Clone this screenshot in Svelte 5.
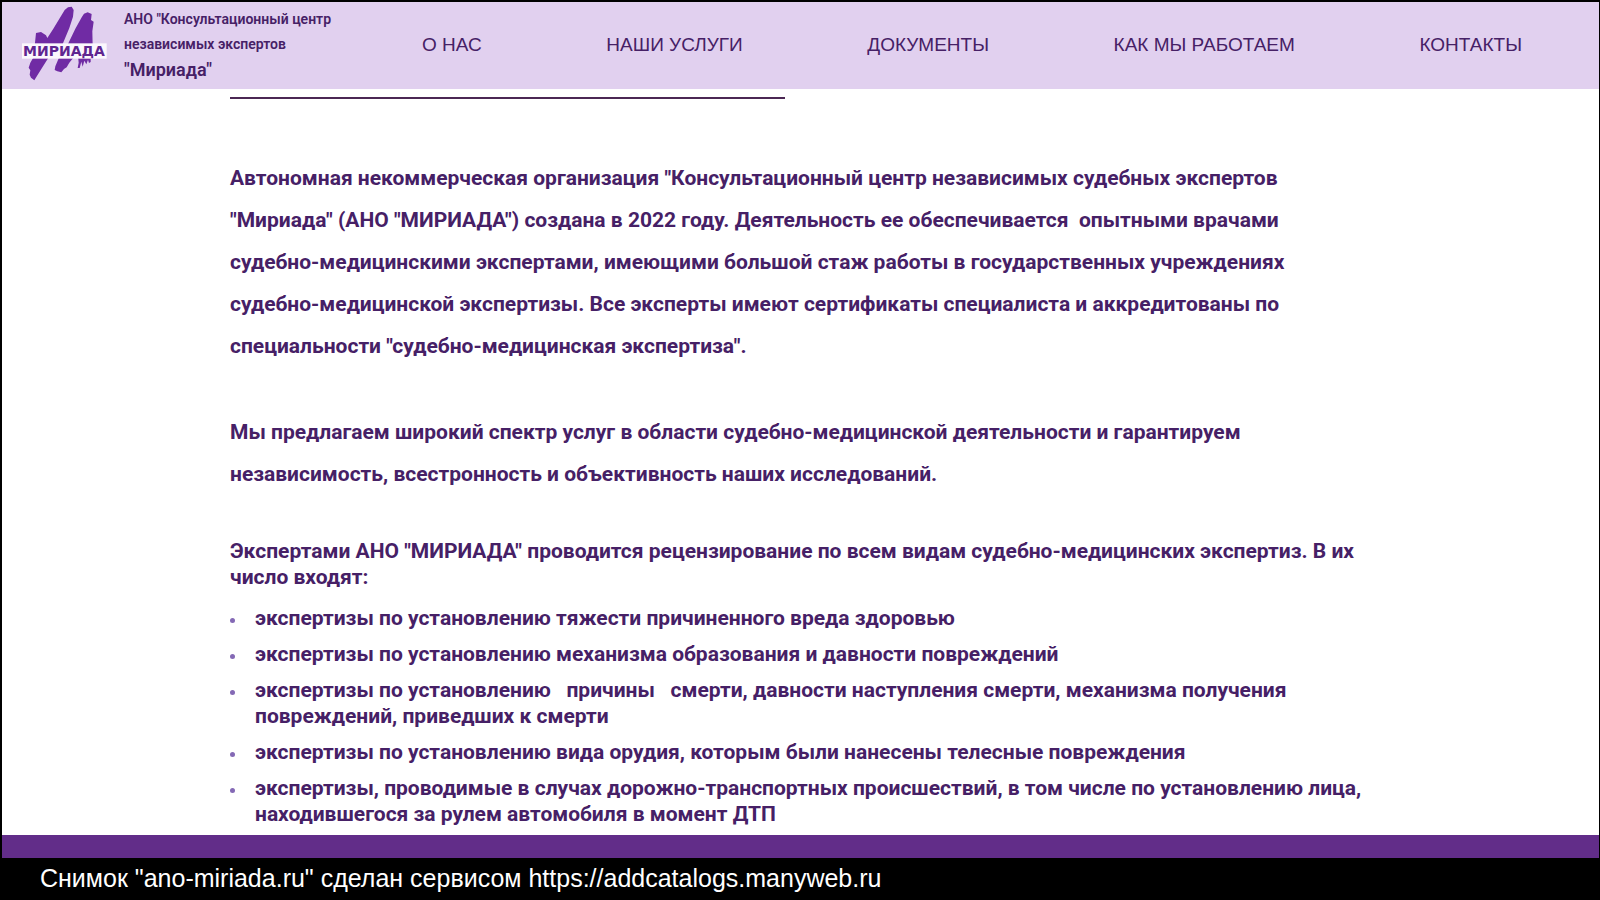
<script>
  const links = ['О НАС', 'НАШИ УСЛУГИ', 'ДОКУМЕНТЫ', 'КАК МЫ РАБОТАЕМ', 'КОНТАКТЫ'];
  const items = [
    'экспертизы по установлению тяжести причиненного вреда здоровью',
    'экспертизы по установлению механизма образования и давности повреждений',
    'экспертизы по установлению \u00a0 причины \u00a0 смерти, давности наступления смерти, механизма получения повреждений, приведших к смерти',
    'экспертизы по установлению вида орудия, которым были нанесены телесные повреждения',
    'экспертизы, проводимые в случах дорожно-транспортных происшествий, в том числе по установлению лица, находившегося за рулем автомобиля в момент ДТП'
  ];
</script>

<div class="page">
  <div class="site">
    <header>
      <a class="brand" href="#top">
        <svg class="logo" viewBox="66 20 258 234" aria-hidden="true">
          <g fill="#702ba4">
            <path d="M108 101 123 98 138 108 142 116 160 88 194 32 204 24 215 22 221 32 219 52 208 86 188 134 204 134 226 88 246 52 252 43 263 39 275 44 273 62 281 67 277 96 278 140 H104 Z" />
            <path d="M104 168 H150 L132 196 116 222 103 243 93 235 89 226 91 213 86 205 91 190Z" />
            <path d="M180 168 H226 L208 190 200 204 192 209 184 219 172 216 164 212 166 201Z" />
            <path d="M234 168 H272 V188 L267 191 264 181 259 195 253 184 248 202 244 187 239 206 233 206 236 190Z" />
          </g>
          <rect x="66" y="132" width="254" height="46" fill="#fbf7fd" />
          <text x="69" y="169">МИРИАДА</text>
        </svg>
        <span class="name">
          <span>АНО "Консультационный центр</span>
          <span>независимых экспертов</span>
          <span class="short">"Мириада"</span>
        </span>
      </a>
      <nav>
        {#each links as link}
          <a href="#top">{link}</a>
        {/each}
      </nav>
    </header>
    <main id="top">
      <hr />
      <p class="wide first">Автономная некоммерческая организация "Консультационный центр независимых судебных экспертов "Мириада" (АНО "МИРИАДА") создана в 2022 году. Деятельность ее обеспечивается&nbsp; опытными врачами судебно-медицинскими экспертами, имеющими большой стаж работы в государственных учреждениях судебно-медицинской экспертизы. Все эксперты имеют сертификаты специалиста и аккредитованы по специальности "судебно-медицинская экспертиза".</p>
      <p class="wide">Мы предлагаем широкий спектр услуг в области судебно-медицинской деятельности и гарантируем независимость, всестронность и объективность наших исследований.</p>
      <p>Экспертами АНО "МИРИАДА" проводится рецензирование по всем видам судебно-медицинских экспертиз. В их число входят:</p>
      <ul>
        {#each items as item}
          <li>{item}</li>
        {/each}
      </ul>
    </main>
    <div class="band"></div>
  </div>
  <footer>Снимок "ano-miriada.ru" сделан сервисом https://addcatalogs.manyweb.ru</footer>
</div>

<style>
  :global(body) {
    margin: 0;
    background: #000;
  }
  .page {
    box-sizing: border-box;
    min-height: 100vh;
    padding: 2px 1px 0 2px;
    display: flex;
    flex-direction: column;
    background: #000;
    font-family: Roboto, 'Liberation Sans', sans-serif;
    color: #462066;
  }
  .site {
    flex: 1;
    display: flex;
    flex-direction: column;
    background: #fff;
  }
  header {
    display: flex;
    align-items: center;
    box-sizing: border-box;
    padding: 0 77px 2px 20px;
    min-height: 87px;
    background: #e1d0ef;
  }
  a {
    color: inherit;
    text-decoration: none;
  }
  .brand {
    display: flex;
    align-items: center;
    gap: 16px;
    flex: 0 0 400px;
  }
  .logo {
    width: 86px;
    height: 78px;
    flex: none;
  }
  .logo text {
    font: bold 42px 'DejaVu Sans', sans-serif;
    fill: #5f2590;
  }
  .name {
    display: flex;
    flex-direction: column;
    font-size: 14px;
    font-weight: 600;
    line-height: 25px;
    white-space: nowrap;
  }
  .short {
    font-size: 18px;
  }
  nav {
    flex: 1;
    display: flex;
    justify-content: space-between;
    font: 19px/24px 'Liberation Sans', Arial, sans-serif;
    white-space: nowrap;
  }
  main {
    flex: 1;
    padding: 8px 230px 8px 228px;
    font-size: 21px;
    font-weight: 700;
    line-height: 26px;
  }
  hr {
    width: 555px;
    max-width: 100%;
    height: 2px;
    margin: 0;
    border: 0;
    background: #4b2754;
  }
  p {
    margin: 0;
  }
  .wide {
    line-height: 42px;
    margin-bottom: 43px;
    padding-right: 76px;
  }
  .first {
    margin-top: 58px;
    margin-bottom: 44px;
  }
  ul {
    display: grid;
    gap: 10px;
    margin: 15px 0 0;
    padding: 0;
    list-style: none;
  }
  li {
    display: flex;
    gap: 20px;
  }
  li::before {
    content: '';
    flex: none;
    width: 5px;
    height: 5px;
    margin-top: 13px;
    border-radius: 50%;
    background: #8469b5;
  }
  .band {
    height: 23px;
    background: #622d89;
  }
  footer {
    padding: 0 38px 2px;
    font: 25px/40px 'Liberation Sans', Arial, sans-serif;
    color: #fff;
  }
</style>
